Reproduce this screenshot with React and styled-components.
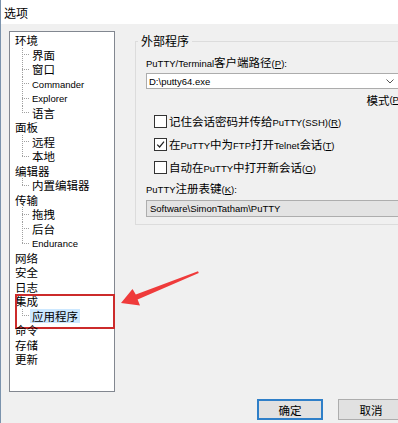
import React from 'react';
import styled, { createGlobalStyle } from 'styled-components';

const FONT = `"Noto Sans CJK SC", sans-serif`;

const GlobalStyle = createGlobalStyle`
  html, body { margin: 0; padding: 0; background: #f0f0f0; overflow: hidden; }
  body { font-family: ${FONT}; font-size: 11.5px; color: #000; }
`;

const Window = styled.div`
  position: relative;
  width: 412px;
  height: 423px;
  box-sizing: border-box;
  display: flex;
  flex-direction: column;
  border-left: 1px solid #7b93ad;
  background: #f0f0f0;
  font-family: ${FONT};
  font-size: 11.5px;
`;

const TitleBar = styled.div`
  height: 24px;
  flex-shrink: 0;
  display: flex;
  align-items: center;
  padding-left: 3px;
  background: #fff;
  font-size: 12px;
`;

const Main = styled.div`
  flex: 1;
  min-height: 0;
  display: flex;
  padding: 7px 8px 3px 8px;
`;

const Tree = styled.div`
  width: 106px;
  height: 361px;
  flex-shrink: 0;
  box-sizing: border-box;
  border: 1px solid #828790;
  background: #fff;
  padding-top: 1px;
  display: flex;
  flex-direction: column;
`;

const Group = styled.div`
  position: relative;
  display: flex;
  flex-direction: column;
`;

const Annotation = styled.div`
  position: absolute;
  top: 0;
  left: 5px;
  right: -1px;
  bottom: -6px;
  border: 2px solid #cc2b2b;
  pointer-events: none;
`;

const Row = styled.div`
  display: flex;
  align-items: center;
  height: 14.5px;
  padding-left: ${(p) => (p.$child ? 0 : 5)}px;
  white-space: nowrap;
`;

const dotH = 'repeating-linear-gradient(to right, #a0a0a0 0 1px, transparent 1px 2px)';
const dotV = 'repeating-linear-gradient(to bottom, #a0a0a0 0 1px, transparent 1px 2px)';

const Connector = styled.span`
  align-self: stretch;
  width: 8px;
  margin-left: 12px;
  margin-right: 2px;
  background-image: ${dotH}, ${dotV};
  background-repeat: no-repeat;
  background-size: 100% 1px, 1px ${(p) => (p.$last ? '50%' : '100%')};
  background-position: 0 50%, 0 0;
`;

const ItemText = styled.span`
  padding: 0 ${(p) => (p.$selected ? 2 : 0)}px;
  margin-left: ${(p) => (p.$selected ? -2 : 0)}px;
  background: ${(p) => (p.$selected ? '#cce8ff' : 'transparent')};
  line-height: 14px;
`;

const Latin = styled.span`
  font-family: "Liberation Sans", Arial, sans-serif;
  font-size: 9.5px;
`;

const Acc = styled.span`
  text-decoration: underline;
`;

const RightCol = styled.div`
  flex: 1;
  min-width: 0;
  display: flex;
  flex-direction: column;
  margin-left: 20px;
`;

const GroupBox = styled.fieldset`
  margin: 3px 0 0 0;
  padding: 0 2px 7px 10px;
  border: 1px solid #dcdcdc;
  display: flex;
  flex-direction: column;
  min-width: 0;
`;

const Legend = styled.legend`
  padding: 0 3px;
  margin-left: -8px;
  font-size: 12px;
  line-height: 14px;
`;

const FieldLabel = styled.div`
  line-height: 14px;
  margin-top: ${(p) => p.$top}px;
  white-space: nowrap;
`;

const Combo = styled.div`
  margin-top: 2px;
  height: 16px;
  box-sizing: border-box;
  border: 1px solid #acacac;
  background: #fff;
  display: flex;
  align-items: center;
  justify-content: space-between;
  padding: 0 6px 0 2px;
  white-space: nowrap;
`;

const ModeRow = styled.div`
  display: flex;
  justify-content: flex-end;
  margin: 4px -9px 0 0;
  line-height: 14px;
  white-space: nowrap;
`;

const CheckList = styled.div`
  display: flex;
  flex-direction: column;
  gap: 7px;
  margin-top: 6px;
  padding-left: 8px;
`;

const CheckRow = styled.label`
  display: flex;
  align-items: center;
  gap: 2px;
  height: 16px;
  white-space: nowrap;
`;

const Box = styled.span`
  width: 13px;
  height: 13px;
  box-sizing: border-box;
  border: 1px solid #333;
  background: #fff;
  display: grid;
  place-items: center;
`;

const Field = styled.div`
  margin-top: 3px;
  height: 17px;
  box-sizing: border-box;
  border: 1px solid #adadad;
  background: #e3e3e3;
  display: flex;
  align-items: center;
  padding-left: 3px;
  white-space: nowrap;
`;

const ButtonRow = styled.div`
  margin-top: auto;
  display: flex;
  justify-content: flex-end;
  gap: 15px;
`;

const Button = styled.button`
  width: 66px;
  height: 21px;
  box-sizing: border-box;
  padding: 0;
  border: ${(p) => (p.$default ? '2px solid #2f7fc8' : '1px solid #adadad')};
  background: #e1e1e1;
  font-family: ${FONT};
  font-size: 11.5px;
  color: #000;
`;

const Arrow = styled.svg`
  position: absolute;
  left: 115px;
  top: 265px;
  pointer-events: none;
`;

/* Renders a Windows-style caption: ASCII runs in a narrow Latin face,
   "&X" marks the underlined access key. */
function withAcc(str, keyBase) {
  const idx = str.indexOf('&');
  if (idx < 0) return str;
  return [
    str.slice(0, idx),
    <Acc key={keyBase + 'a'}>{str[idx + 1]}</Acc>,
    str.slice(idx + 2),
  ];
}

function Caption({ text }) {
  const parts = text.match(/[\x00-\x7F]+|[^\x00-\x7F]+/g) || [];
  return parts.map((p, i) =>
    /^[\x00-\x7F]/.test(p) ? (
      <Latin key={i}>{withAcc(p, i)}</Latin>
    ) : (
      <span key={i}>{p}</span>
    )
  );
}

const tree = [
  { label: '环境', children: ['界面', '窗口', 'Commander', 'Explorer', '语言'] },
  { label: '面板', children: ['远程', '本地'] },
  { label: '编辑器', children: ['内置编辑器'] },
  { label: '传输', children: ['拖拽', '后台', 'Endurance'] },
  { label: '网络' },
  { label: '安全' },
  { label: '日志' },
  { label: '集成', children: ['应用程序'], marked: true, selected: '应用程序' },
  { label: '命令' },
  { label: '存储' },
  { label: '更新' },
];

const checks = [
  { checked: false, text: '记住会话密码并传给PuTTY(SSH)(&R)' },
  { checked: true, text: '在PuTTY中为FTP打开Telnet会话(&T)' },
  { checked: false, text: '自动在PuTTY中打开新会话(&O)' },
];

function Chevron() {
  return (
    <svg width="8" height="5" viewBox="0 0 8 5">
      <path d="M0.5 0.5 L4 4 L7.5 0.5" fill="none" stroke="#555" strokeWidth="1" />
    </svg>
  );
}

function Tick() {
  return (
    <svg width="9" height="9" viewBox="0 0 9 9">
      <path d="M1.2 4.6 L3.6 7 L8 1.6" fill="none" stroke="#222" strokeWidth="1.2" />
    </svg>
  );
}

export default function App() {
  return (
    <>
      <GlobalStyle />
      <Window>
        <TitleBar>选项</TitleBar>
        <Main>
          <Tree>
            {tree.map((node) => (
              <Group key={node.label}>
                <Row>
                  <ItemText>{node.label}</ItemText>
                </Row>
                {(node.children || []).map((c, i, arr) => (
                  <Row $child key={c}>
                    <Connector $last={i === arr.length - 1} />
                    <ItemText $selected={node.selected === c}>
                      <Caption text={c} />
                    </ItemText>
                  </Row>
                ))}
                {node.marked && <Annotation />}
              </Group>
            ))}
          </Tree>
          <RightCol>
            <GroupBox>
              <Legend>外部程序</Legend>
              <FieldLabel $top={7}>
                <Caption text="PuTTY/Terminal客户端路径(&P):" />
              </FieldLabel>
              <Combo>
                <Caption text="D:\putty64.exe" />
                <Chevron />
              </Combo>
              <ModeRow>
                <Caption text="模式(&P)..." />
              </ModeRow>
              <CheckList>
                {checks.map((c) => (
                  <CheckRow key={c.text}>
                    <Box>{c.checked && <Tick />}</Box>
                    <span>
                      <Caption text={c.text} />
                    </span>
                  </CheckRow>
                ))}
              </CheckList>
              <FieldLabel $top={6}>
                <Caption text="PuTTY注册表键(&K):" />
              </FieldLabel>
              <Field>
                <Caption text="Software\SimonTatham\PuTTY" />
              </Field>
            </GroupBox>
            <ButtonRow>
              <Button $default>确定</Button>
              <Button>取消</Button>
            </ButtonRow>
          </RightCol>
        </Main>
        <Arrow width="90" height="45" viewBox="0 0 90 45">
          <polygon
            points="5,38 16.5,24 19.8,29.6 82,6.2 82.8,8 21.6,34.6 24,40.5"
            fill="#ef3b3b"
          />
        </Arrow>
      </Window>
    </>
  );
}
